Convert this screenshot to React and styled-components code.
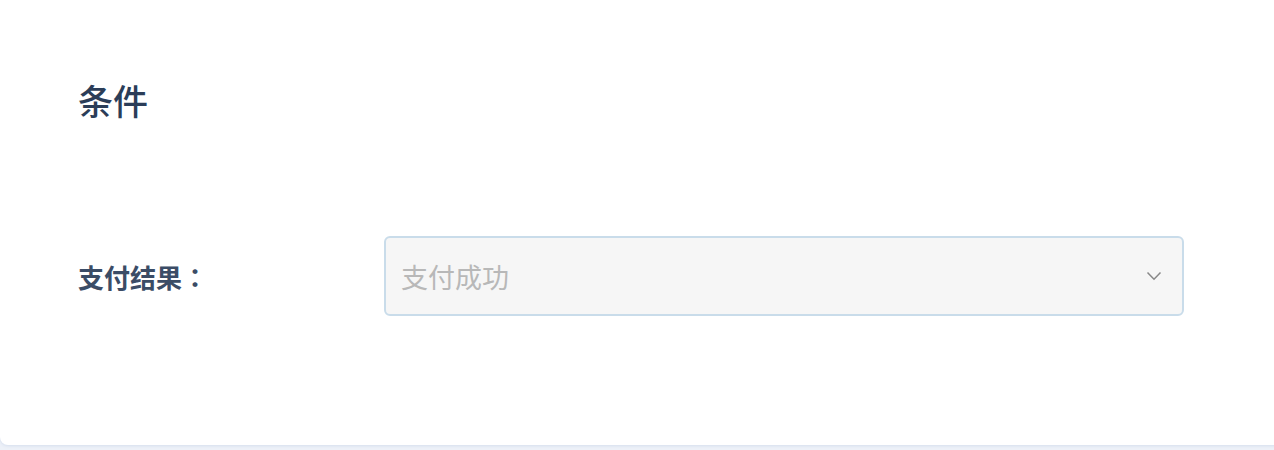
import styled, {createGlobalStyle} from 'styled-components'

const GlobalStyle = createGlobalStyle`
	html, body {
		margin: 0;
		padding: 0;
		background: #edf1f8;
		font-family: "Noto Sans CJK SC", "Noto Sans", sans-serif;
		overflow: hidden;
	}
`

const Page = styled.div`
	width: 1274px;
	height: 450px;
	overflow: hidden;
`
const Card = styled.div`
	width: 1290px;
	height: 445px;
	box-sizing: border-box;
	background: #ffffff;
	border-radius: 0 0 0 8px;
	box-shadow: 0 1px 3px rgba(170, 190, 220, 0.35);
	padding: 72px 0 0 78px;
`
const Title = styled.h2`
	margin: 0;
	font-size: 35px;
	font-weight: 500;
	line-height: 56px;
	color: #2b3d58;
`
const Row = styled.div`
	margin-top: 108px;
	display: flex;
	align-items: center;
`
const Label = styled.div`
	width: 306px;
	font-family: "Noto Sans CJK TC", "Noto Sans CJK SC", sans-serif;
	font-size: 26px;
	font-weight: 700;
	color: #3b4c66;
`
const Select = styled.div`
	width: 800px;
	height: 80px;
	box-sizing: border-box;
	display: flex;
	align-items: center;
	justify-content: space-between;
	padding: 0 20px 0 15px;
	background: #f6f6f6;
	border: 2px solid #c9dcea;
	border-radius: 6px;
`
const Value = styled.span`
	font-size: 27px;
	color: #b8b8b8;
`
const Chevron = styled.svg`
	width: 16px;
	height: 10px;
`

const App = () => {
	return (
		<Page>
			<GlobalStyle />
			<Card>
				<Title>条件</Title>
				<Row>
					<Label>支付结果：</Label>
					<Select>
						<Value>支付成功</Value>
						<Chevron viewBox="0 0 16 10">
							<path d="M1.5 1.5 L8 8.2 L14.5 1.5" fill="none" stroke="#888" strokeWidth="1.5" />
						</Chevron>
					</Select>
				</Row>
			</Card>
		</Page>
	)
}
export default App
